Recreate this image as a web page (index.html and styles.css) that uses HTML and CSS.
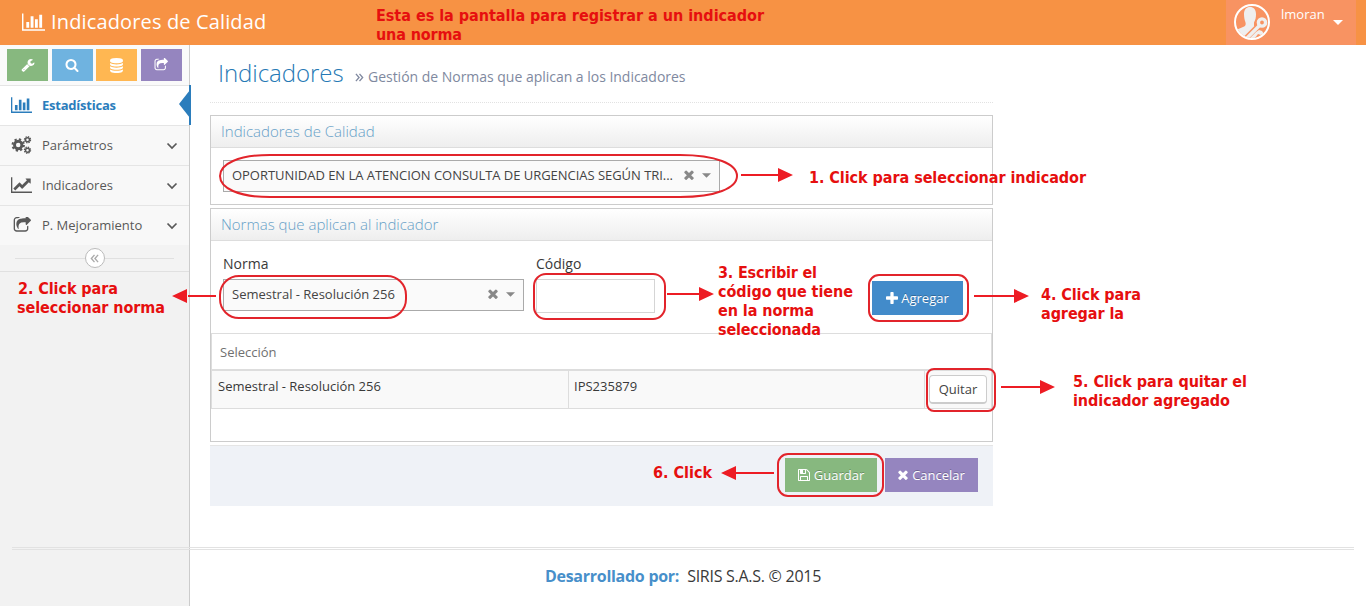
FILE: index.html
```html
<!DOCTYPE html>
<html lang="es">
<head>
<meta charset="utf-8">
<title>Indicadores de Calidad</title>
<link rel="stylesheet" href="styles.css">
</head>
<body>
<svg class="defs" width="0" height="0">
  <symbol id="bars" viewBox="0 0 2048 1536"><path d="M640 768v512h-256v-512h256zm384-512v1024h-256v-1024h256zm1024 1152v128h-2048v-1536h128v1408h1920zm-640-896v768h-256v-768h256zm384-384v1152h-256v-1152h256z"/></symbol>
  <symbol id="line" viewBox="0 128 2048 1536"><path d="M2048 1536v128h-2048v-1536h128v1408h1920zm-128-1248v435q0 21-19.5 29.5t-35.5-7.5l-121-121-633 633q-10 10-23 10t-23-10l-233-233-416 416-192-192 585-585q10-10 23-10t23 10l233 233 464-464-121-121q-16-16-7.5-35.5t29.5-19.5h435q14 0 23 9t9 23z"/></symbol>
  <symbol id="search" viewBox="0 0 1792 1792"><path d="M1216 832q0-185-131.5-316.5t-316.5-131.5-316.5 131.5-131.5 316.5 131.5 316.5 316.5 131.5 316.5-131.5 131.5-316.5zm512 832q0 52-38 90t-90 38q-54 0-90-38l-343-342q-179 124-399 124-143 0-273.5-55.5t-225-150-150-225-55.5-273.5 55.5-273.5 150-225 225-150 273.5-55.5 273.5 55.5 225 150 150 225 55.5 273.5q0 220-124 399l343 343q37 37 37 90z"/></symbol>
  <symbol id="wrench" viewBox="0 0 1792 1792"><path d="M448 1472q0-26-19-45t-45-19-45 19-19 45 19 45 45 19 45-19 19-45zm644-420l-682 682q-37 37-90 37-52 0-91-37l-106-108q-38-36-38-90 0-53 38-91l681-681q39 98 114.5 173.5t173.5 114.5zm634-435q0 39-23 106-47 134-164.5 217.5t-258.5 83.5q-185 0-316.5-131.5t-131.5-316.5 131.5-316.5 316.5-131.5q58 0 121.5 16.5t107.5 46.5q16 11 16 28t-16 28l-293 169v224l193 107q5-3 79-48.5t135.5-81 70.5-35.5q15 0 23.5 10t8.5 25z"/></symbol>
  <symbol id="database" viewBox="0 0 1792 1792"><path d="M896 768q237 0 443-43t325-127v170q0 69-103 128t-280 93.500-385 34.500-385-34.500-280-93.500-103-128v-170q119 84 325 127t443 43zm0 768q237 0 443-43t325-127v170q0 69-103 128t-280 93.500-385 34.500-385-34.500-280-93.500-103-128v-170q119 84 325 127t443 43zm0-384q237 0 443-43t325-127v170q0 69-103 128t-280 93.500-385 34.500-385-34.500-280-93.500-103-128v-170q119 84 325 127t443 43zm0-1152q208 0 385 34.500t280 93.500 103 128v128q0 69-103 128t-280 93.500-385 34.500-385-34.500-280-93.500-103-128v-128q0-69 103-128t280-93.500 385-34.500z"/></symbol>
  <symbol id="share" viewBox="0 128 1728 1536"><path d="M1472 989v259q0 119-84.500 203.500t-203.500 84.500h-832q-119 0-203.500-84.500t-84.500-203.500v-832q0-119 84.500-203.500t203.500-84.500h255q13 0 22.500 9.500t9.500 22.500q0 27-26 32-77 26-133 60-10 4-16 4h-112q-66 0-113 47t-47 113v832q0 66 47 113t113 47h832q66 0 113-47t47-113v-214q0-19 18-29 28-13 54-37 16-16 35-8 21 9 21 29zm237-496l-384 384q-18 19-45 19-12 0-25-5-39-17-39-59v-192h-160q-323 0-438 131-119 137-74 473 3 23-20 34-8 2-12 2-16 0-26-13-10-14-21-31t-39.500-68.500-49.500-99.500-38.500-114-17.500-122q0-49 3.500-91t14-90 28-88 47-81.500 68.500-74 94.500-61.500 124.500-48.500 159.500-30.500 196.500-11h160v-192q0-42 39-59 13-5 25-5 26 0 45 19l384 384q19 19 19 45t-19 45z"/></symbol>
  <symbol id="times" viewBox="302 302 1188 1252"><path d="M1490 1322q0 40-28 68l-136 136q-28 28-68 28t-68-28l-294-294-294 294q-28 28-68 28t-68-28l-136-136q-28-28-28-68t28-68l294-294-294-294q-28-28-28-68t28-68l136-136q28-28 68-28t68 28l294 294 294-294q28-28 68-28t68 28l136 136q28 28 28 68t-28 68l-294 294 294 294q28 28 28 68z"/></symbol>
  <symbol id="plus" viewBox="192 128 1408 1408"><path d="M1600 736v192q0 40-28 68t-68 28h-416v416q0 40-28 68t-68 28h-192q-40 0-68-28t-28-68v-416h-416q-40 0-68-28t-28-68v-192q0-40 28-68t68-28h416v-416q0-40 28-68t68-28h192q40 0 68 28t28 68v416h416q40 0 68 28t28 68z"/></symbol>
  <symbol id="floppy" viewBox="128 128 1536 1536"><path d="M512 1536h768v-384h-768v384zm896 0h128v-896q0-14-10-38.500t-20-34.500l-281-281q-10-10-34-20t-39-10v416q0 40-28 68t-68 28h-576q-40 0-68-28t-28-68v-416h-128v1280h128v-416q0-40 28-68t68-28h832q40 0 68 28t28 68v416zm-384-928v-320q0-13-9.500-22.500t-22.500-9.500h-192q-13 0-22.500 9.500t-9.500 22.500v320q0 13 9.500 22.500t22.500 9.500h192q13 0 22.500-9.500t9.500-22.500zm640 32v928q0 40-28 68t-68 28h-1344q-40 0-68-28t-28-68v-1344q0-40 28-68t68-28h928q40 0 88 20t76 48l280 280q28 28 48 76t20 88z"/></symbol>
  <symbol id="cogs" viewBox="0 0 20 18"><g fill="none" stroke="currentColor"><circle cx="6.700" cy="9" r="3.700" stroke-width="2.900"/><circle cx="6.700" cy="9" r="5.700" stroke-width="2" stroke-dasharray="2.240 2.240"/><circle cx="16" cy="3.800" r="2" stroke-width="1.500"/><circle cx="16" cy="3.800" r="3.100" stroke-width="1.200" stroke-dasharray="1.390 1.040"/><circle cx="16" cy="14.200" r="2" stroke-width="1.500"/><circle cx="16" cy="14.200" r="3.100" stroke-width="1.200" stroke-dasharray="1.390 1.040"/></g></symbol>
  <symbol id="chevron" viewBox="0 0 12 8"><path d="M1.500 1.500L6 6l4.500-4.500" fill="none" stroke="currentColor" stroke-width="1.700"/></symbol>
  <symbol id="laquo" viewBox="0 0 10 10"><path d="M5 1L1.500 5 5 9M9 1L5.500 5 9 9" fill="none" stroke="currentColor" stroke-width="1.500"/></symbol>
  <symbol id="caret" viewBox="0 0 10 5"><path d="M0 0h10L5 5z"/></symbol>
</svg>

<header class="navbar">
  <div class="brand"><svg class="i-brand"><use href="#bars"/></svg><span>Indicadores de Calidad</span></div>
  <div class="user">
    <svg class="avatar" viewBox="0 0 36 36">
      <defs><clipPath id="face"><circle cx="18" cy="18" r="16"/></clipPath></defs>
      <g clip-path="url(#face)">
        <path fill="#efefef" d="M10 10c0-4.500 2.500-7 6-7s6 2.500 6 7c0 3.500-.5 6-2 8.500v3.500l4 2L14 36H0V27l9-4c2.500-1 3-2 2.500-4.500C10.500 16 10 13 10 10z"/>
        <g fill="none" stroke="#f89362"><circle cx="28" cy="18.500" r="3.800" stroke-width="6"/><path d="M26 21L12 35" stroke-width="6.500"/></g>
        <g fill="none" stroke="#efefef"><circle cx="28" cy="18.500" r="3.600" stroke-width="3.400"/><path d="M26 21L12 35" stroke-width="3.400"/></g>
        <path fill="#efefef" d="M22 28l3-2 3 1 2 3-3 1-3-1-3 4h-5z"/>
      </g>
      <circle cx="18" cy="18" r="17" fill="none" stroke="#fff" stroke-width="2"/>
    </svg>
    <span class="user-name">lmoran</span><svg class="i-caret"><use href="#caret"/></svg>
  </div>
</header>

<div class="body">
  <aside class="sidebar">
    <div class="shortcuts">
      <span class="sc green"><svg><use href="#wrench"/></svg></span>
      <span class="sc blue"><svg><use href="#search"/></svg></span>
      <span class="sc yellow"><svg class="db"><use href="#database"/></svg></span>
      <span class="sc purple"><svg><use href="#share"/></svg></span>
    </div>
    <nav>
      <div class="item active"><svg class="wide"><use href="#bars"/></svg><span>Estadísticas</span></div>
      <div class="item"><svg class="gear"><use href="#cogs"/></svg><span>Parámetros</span><svg class="chev"><use href="#chevron"/></svg></div>
      <div class="item"><svg class="wide"><use href="#line"/></svg><span>Indicadores</span><svg class="chev"><use href="#chevron"/></svg></div>
      <div class="item"><svg class="shr"><use href="#share"/></svg><span>P. Mejoramiento</span><svg class="chev"><use href="#chevron"/></svg></div>
    </nav>
    <div class="collapse"><span class="knob"><svg><use href="#laquo"/></svg></span></div>
  </aside>

  <main class="content">
    <div class="page-header">
      <h1>Indicadores</h1><svg class="i-sep"><use href="#laquo"/></svg><small>Gestión de Normas que aplican a los Indicadores</small>
    </div>

    <section class="panel first">
      <h2>Indicadores de Calidad</h2>
      <div class="select big"><span>OPORTUNIDAD EN LA ATENCION CONSULTA DE URGENCIAS SEGÚN TRI...</span><svg class="x"><use href="#times"/></svg><svg class="c"><use href="#caret"/></svg></div>
    </section>

    <section class="panel second">
      <h2>Normas que aplican al indicador</h2>
      <div class="form">
        <div class="field norma"><label>Norma</label><div class="select"><span>Semestral - Resolución 256</span><svg class="x"><use href="#times"/></svg><svg class="c"><use href="#caret"/></svg></div></div>
        <div class="field codigo"><label>Código</label><div class="input"></div></div>
        <div class="btn add"><svg class="i-plus"><use href="#plus"/></svg><span>Agregar</span></div>
      </div>
      <div class="table">
        <div class="thead">Selección</div>
        <div class="row"><div>Semestral - Resolución 256</div><div>IPS235879</div><div class="act"><span class="quitar">Quitar</span></div></div>
      </div>
    </section>

    <div class="actions">
      <div class="btn save"><svg class="i-save"><use href="#floppy"/></svg><span>Guardar</span></div>
      <div class="btn cancel"><svg class="i-x"><use href="#times"/></svg><span>Cancelar</span></div>
    </div>
  </main>
</div>

<footer class="footer"><b>Desarrollado por:</b><span>SIRIS S.A.S. © 2015</span></footer>

<svg class="notes" viewBox="0 0 1366 606">
  <g class="rings">
    <path d="M270 155H680C716 155 737 164 737 176S716 197 680 197H270C238 197 220 188 220 176S238 155 270 155Z"/>
    <rect x="220" y="276" width="186" height="42" rx="19"/>
    <rect x="534" y="274" width="131" height="45" rx="12"/>
    <rect x="869" y="275" width="99" height="46" rx="10"/>
    <rect x="927" y="369" width="68" height="42" rx="7"/>
    <rect x="778" y="454" width="105" height="42" rx="10"/>
  </g>
  <g class="lines">
    <path d="M741 175H779M188 296H216M667 294H700M974 296H1015M1001 387H1041M735 473H774"/>
  </g>
  <g class="heads">
    <path d="M778 168l15 7-15 7zM187 289l-15 7 15 7zM699 287l15 7-15 7zM1014 289l15 7-15 7zM1040 380l15 7-15 7zM736 466l-15 7 15 7z"/>
  </g>
  <g class="labels">
    <text x="376" y="21" textLength="388">Esta es la pantalla para registrar a un indicador</text>
    <text x="376" y="40" textLength="86">una norma</text>
    <text x="809" y="183" textLength="277">1. Click para seleccionar indicador</text>
    <text x="18" y="294" textLength="100">2. Click para</text>
    <text x="17" y="313" textLength="148">seleccionar norma</text>
    <text x="718" y="278" textLength="99">3. Escribir el</text>
    <text x="718" y="297" textLength="135">código que tiene</text>
    <text x="718" y="316" textLength="96">en la norma</text>
    <text x="718" y="335" textLength="103">seleccionada</text>
    <text x="1041" y="300" textLength="100">4. Click para</text>
    <text x="1041" y="319" textLength="83">agregar la</text>
    <text x="1073" y="387" textLength="174">5. Click para quitar el</text>
    <text x="1073" y="406" textLength="157">indicador agregado</text>
    <text x="653" y="478" textLength="59">6. Click</text>
  </g>
</svg>
</body>
</html>
```
FILE: styles.css
```css
* { box-sizing: border-box; }
html, body { height: 100%; margin: 0; overflow: hidden; }
body { display: flex; flex-direction: column; position: relative; background: #fff; color: #393939; font: 13px/20px "Open Sans", sans-serif; }
svg { fill: currentColor; flex: none; display: block; }
.defs { position: absolute; }

.navbar { height: 45px; flex: none; background: #f79244; color: #fff; display: flex; justify-content: space-between; padding: 0 10px 0 22px; }
.brand { display: flex; align-items: center; gap: 6px; height: 43px; font-size: 20px; letter-spacing: 0.14px; }
.i-brand { width: 23px; height: 18px; }
.user { width: 130px; background: #f89362; display: flex; padding: 4px 0 0 8px; }
.avatar { width: 36px; height: 36px; }
.user-name { margin: 0 8px 0 11px; width: 44px; }
.i-caret { width: 10px; height: 5px; margin-top: 16px; }

.body { flex: 1; display: flex; }
.sidebar { width: 190px; background: #f2f2f2; border-right: 1px solid #ccc; }
.shortcuts { height: 40px; background: #fafafa; display: flex; gap: 3.6px; padding: 4px 0 0 7px; }
.sc { width: 41px; height: 32px; display: flex; align-items: center; justify-content: center; color: #fff; }
.sc svg { width: 14px; height: 14px; }
.sc .db { width: 15px; height: 15px; }
.green { background: #87b87f; }
.blue { background: #6fb3e0; }
.yellow { background: #ffb752; }
.purple { background: #9585bf; }
.item { height: 40px; border-top: 1px solid #e5e5e5; background: #f8f8f8; color: #585858; display: grid; grid-template-columns: 31px 1fr 22px; align-items: center; padding: 0 0 2px 11px; }
.item.active { background: #fff; color: #2b7dbc; font-weight: bold; position: relative; letter-spacing: -0.22px; }
.item.active::before { content: ""; position: absolute; right: -2px; top: -1px; width: 2px; height: 40px; background: #2b7dbc; }
.item.active::after { content: ""; position: absolute; right: -1px; top: 4px; border: solid transparent; border-width: 14px 11px 14px 0; border-right-color: #2b7dbc; }
.wide { width: 21px; height: 16px; }
.gear { width: 21px; height: 18px; }
.shr { width: 18px; height: 16px; margin-left: 2px; }
.chev { width: 12px; height: 8px; margin-top: 2px; margin-left: -1px; }
.collapse { height: 27px; border-bottom: 1px solid #e0e0e0; display: flex; justify-content: center; align-items: center; background: linear-gradient(#e0e0e0, #e0e0e0) 15px 13px / 159px 1px no-repeat #f3f3f3; }
.knob { width: 20px; height: 20px; border: 1px solid #bbb; border-radius: 50%; background: #fff; color: #aaa; display: flex; align-items: center; justify-content: center; }
.knob svg { width: 9px; height: 9px; }

.content { width: 803px; padding-left: 20px; }
.page-header { height: 58px; border-bottom: 1px dotted #e2e2e2; display: flex; align-items: baseline; padding: 12px 0 0 8px; }
h1 { margin: 0; font-size: 24px; line-height: 32px; font-weight: 300; color: #2679b5; letter-spacing: -0.05px; width: 137px; }
.i-sep { width: 9px; height: 9px; transform: scaleX(-1); margin-right: 4px; color: #8089a0; }
small { font-size: 14px; color: #8089a0; letter-spacing: -0.02px; }
.panel { border: 1px solid #ccc; }
.first { margin-top: 12px; height: 90px; }
.second { margin-top: 3px; height: 234px; }
h2 { margin: 0; height: 32px; border-bottom: 1px solid #ddd; background: linear-gradient(#fff, #eee); font-size: 15px; line-height: 31px; font-weight: 300; color: #669fc7; padding-left: 10px; }
.select { height: 32px; border: 1px solid #aaa; background: #fafafa; color: #444; display: flex; align-items: center; padding: 0 8px 2px 8px; }
.select span { flex: 1; white-space: nowrap; }
.select .x { width: 10px; height: 10px; color: #888; margin-right: 8px; }
.select .c { width: 9px; height: 5px; color: #888; }
.big { width: 497px; margin: 12px 0 0 12px; }
.big span { letter-spacing: -0.035px; }
.form { display: flex; height: 92px; padding: 12px 0 0 12px; }
label { display: block; font-size: 14px; line-height: 22px; height: 26px; }
.norma { width: 301px; }
.codigo { margin-left: 12px; width: 120px; padding-right: 1px; }
.input { height: 34px; border: 1px solid #d5d5d5; background: #fff; }
.btn { display: flex; align-items: center; justify-content: center; height: 34px; color: #fff; gap: 4px; text-shadow: 0 -1px 0 rgba(0,0,0,.25); }
.add { width: 91px; margin: 28px 0 0 216px; background: #428bca; gap: 3px; }
.i-plus { width: 12px; height: 12px; }
.i-save { width: 12px; height: 12px; }
.i-x { width: 10px; height: 10px; }
.table { border: 1px solid #ddd; }
.thead { height: 37px; border-bottom: 2px solid #ddd; padding: 8px 8px; color: #707070; }
.row { height: 37px; display: grid; grid-template-columns: 356px 356px 1fr; background: #f9f9f9; }
.row > div { padding: 5px 5px; border-left: 1px solid #ddd; }
.row > div:first-child { border-left: 0; padding-left: 6px; }
.row > .act { padding: 4px 0 0 4px; }
.quitar { display: block; width: 58px; height: 29px; border: 1px solid #ccc; border-bottom-width: 2px; border-radius: 4px; background: #fff; color: #444; text-align: center; line-height: 27px; }
.actions { margin-top: 3px; height: 61px; background: #eff2f7; border-top: 1px solid #e5e5e5; display: flex; justify-content: flex-end; gap: 8px; padding: 12px 15px 0 0; }
.save { width: 92px; background: #87b87f; }
.cancel { width: 93px; background: #9585bf; }

.footer { position: absolute; left: 12px; right: 12px; top: 547px; height: 59px; border-top: 3px double #e2e2e2; display: flex; justify-content: center; gap: 8px; padding-top: 13px; font-size: 16px; line-height: 26px; letter-spacing: -0.27px; }
.footer b { color: #478fca; }

.notes { position: absolute; left: 0; top: 0; width: 1366px; height: 606px; pointer-events: none; }
.rings { fill: none; stroke: #e2242b; stroke-width: 2; }
.lines { fill: none; stroke: #ed1c24; stroke-width: 2; }
.heads { fill: #ed1c24; }
.labels { fill: #e60f0f; font: bold 16px "DejaVu Sans Condensed", "DejaVu Sans", sans-serif; font-stretch: condensed; }
```
